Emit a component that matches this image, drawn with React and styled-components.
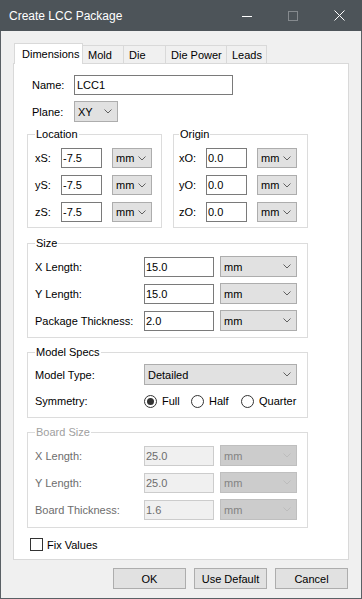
import React from 'react'
import styled, {createGlobalStyle} from 'styled-components'

const GlobalStyle = createGlobalStyle`
  html, body {
    margin: 0;
    padding: 0;
    background: #f0f0f0;
  }
  body {
    font-family: "Liberation Sans", Arial, sans-serif;
    font-size: 11px;
    color: #000;
  }
  * {
    box-sizing: border-box;
  }
`

const Window = styled.div`
  width: 362px;
  height: 599px;
  display: flex;
  flex-direction: column;
  background: #f0f0f0;
`
const TitleBar = styled.div`
  height: 31px;
  background: #4d5459;
  display: flex;
  align-items: center;
  flex-shrink: 0;
`
const Title = styled.div`
  flex: 1;
  padding-left: 9px;
  color: #fff;
  font-size: 12px;
`
const CaptionButton = styled.div`
  width: 46px;
  height: 31px;
  display: flex;
  align-items: center;
  justify-content: center;
`
const Body = styled.div`
  flex: 1;
  border: 1px solid #5a6065;
  border-top: none;
  padding: 12px 12px 0 12px;
  display: flex;
  flex-direction: column;
`
const TabRow = styled.div`
  display: flex;
  align-items: flex-end;
  height: 21px;
  margin: 0 0 -1px 1px;
  position: relative;
  z-index: 1;
`
const Tab = styled.div`
  width: ${p => p.w}px;
  height: ${p => p.active ? 21 : 19}px;
  margin-left: ${p => p.first ? 0 : -1}px;
  background: ${p => p.active ? '#fff' : '#f0f0f0'};
  border: 1px solid #d9d9d9;
  border-bottom: ${p => p.active ? 'none' : '1px solid #d9d9d9'};
  padding: ${p => p.active ? '3px 0 0 7px' : '2px 0 0 5px'};
  line-height: 14px;
  position: relative;
  z-index: ${p => p.active ? 2 : 1};
  white-space: nowrap;
`
const Panel = styled.div`
  width: 336px;
  height: 497px;
  background: #fff;
  border: 1px solid #d9d9d9;
  padding: 11px 0 0 13px;
  display: flex;
  flex-direction: column;
`
const FieldRow = styled.div`
  display: flex;
  align-items: center;
  margin-left: 5px;
  margin-bottom: 6px;
`
const RowLabel = styled.div`
  width: ${p => p.w}px;
  flex-shrink: 0;
  color: ${p => p.disabled ? '#6d6d6d' : '#000'};
  white-space: nowrap;
`
const TextBox = styled.input`
  width: ${p => p.w}px;
  height: 20px;
  border: 1px solid ${p => p.disabled ? '#cccccc' : '#7a7a7a'};
  background: ${p => p.disabled ? '#f0f0f0' : '#fff'};
  color: ${p => p.disabled ? '#6d6d6d' : '#000'};
  font: inherit;
  padding: 0 0 0 ${p => p.pad ?? 1}px;
  margin: 0;
  outline: none;
  border-radius: 0;
`
const Combo = styled.div`
  width: ${p => p.w}px;
  height: ${p => p.h || 21}px;
  margin-left: ${p => p.ml || 0}px;
  border: 1px solid ${p => p.disabled ? '#bfbfbf' : '#adadad'};
  background: ${p => p.disabled ? '#cccccc' : '#e1e1e1'};
  color: ${p => p.disabled ? '#838383' : '#000'};
  display: flex;
  align-items: center;
  justify-content: space-between;
  padding: 0 5px 0 3px;
  flex-shrink: 0;
`
const GroupPair = styled.div`
  display: flex;
  gap: 11px;
  margin-top: -1px;
`
const Group = styled.fieldset`
  width: ${p => p.w || 281}px;
  margin: ${p => p.mt || 0}px 0 0 0;
  border: 1px solid #dcdcdc;
  padding: ${p => p.pt || 6}px 0 ${p => p.pb || 6}px ${p => p.pl || 7}px;
  min-width: 0;
  display: flex;
  flex-direction: column;
  gap: ${p => p.gap || 6}px;
`
const Legend = styled.legend`
  font-size: 11px;
  line-height: 14px;
  padding: 0 1px;
  margin: 0;
  color: ${p => p.disabled ? '#a0a0a0' : '#000'};
`
const GridRow = styled.div`
  display: flex;
  align-items: center;
  height: ${p => p.h || 21}px;
`
const RadioItem = styled.div`
  width: ${p => p.w}px;
  display: flex;
  align-items: center;
  gap: 5px;
  flex-shrink: 0;
`
const RadioCircle = styled.div`
  width: 13px;
  height: 13px;
  border-radius: 50%;
  border: 1px solid #333;
  background: #fff;
  display: flex;
  align-items: center;
  justify-content: center;
  &::after {
    content: '';
    width: 7px;
    height: 7px;
    border-radius: 50%;
    background: ${p => p.checked ? '#333' : 'transparent'};
  }
`
const CheckRow = styled.div`
  display: flex;
  align-items: center;
  gap: 4px;
  margin: 10px 0 0 3px;
`
const CheckBox = styled.div`
  width: 13px;
  height: 13px;
  border: 1px solid #333;
  background: #fff;
`
const Footer = styled.div`
  display: flex;
  justify-content: flex-end;
  gap: 8px;
  margin-top: 8px;
  padding-right: 1px;
`
const Button = styled.div`
  width: 73px;
  height: 21px;
  background: #e1e1e1;
  border: 1px solid #adadad;
  display: flex;
  align-items: center;
  justify-content: center;
`

const Chevron = ({disabled}) => (
  <svg width="8" height="5" viewBox="0 0 8 5">
    <polyline points="0.5,0.5 4,4 7.5,0.5" fill="none" stroke={disabled ? '#bcbcbc' : '#606060'} strokeWidth="1"/>
  </svg>
)

const Select = ({value, w, h, ml, disabled}) => (
  <Combo w={w} h={h} ml={ml} disabled={disabled}>
    <span>{value}</span>
    <Chevron disabled={disabled}/>
  </Combo>
)

const coordRows = (prefix) => ['x', 'y', 'z'].map(a => a + prefix)

const App = () => {
  const tabs = [
    {name: 'Dimensions', w: 69, active: true},
    {name: 'Mold', w: 42},
    {name: 'Die', w: 43},
    {name: 'Die Power', w: 62},
    {name: 'Leads', w: 41},
  ]
  const sizeRows = [['X Length:', '15.0'], ['Y Length:', '15.0'], ['Package Thickness:', '2.0']]
  const boardRows = [['X Length:', '25.0'], ['Y Length:', '25.0'], ['Board Thickness:', '1.6']]
  return (
    <Window>
      <GlobalStyle/>
      <TitleBar>
        <Title>Create LCC Package</Title>
        <CaptionButton>
          <svg width="10" height="10" viewBox="0 0 10 10">
            <line x1="0" y1="5.5" x2="10" y2="5.5" stroke="#fff" strokeWidth="1"/>
          </svg>
        </CaptionButton>
        <CaptionButton>
          <svg width="10" height="10" viewBox="0 0 10 10">
            <rect x="0.5" y="0.5" width="9" height="9" fill="none" stroke="#858a8e" strokeWidth="1"/>
          </svg>
        </CaptionButton>
        <CaptionButton>
          <svg width="11" height="11" viewBox="0 0 11 11">
            <path d="M0.5 0.5 L10.5 10.5 M10.5 0.5 L0.5 10.5" stroke="#fff" strokeWidth="1"/>
          </svg>
        </CaptionButton>
      </TitleBar>
      <Body>
        <TabRow>
          {tabs.map((t, i) => (
            <Tab key={t.name} w={t.w} active={t.active} first={i === 0}>{t.name}</Tab>
          ))}
        </TabRow>
        <Panel>
          <FieldRow>
            <RowLabel w={42}>Name:</RowLabel>
            <TextBox w={159} pad={2} defaultValue="LCC1" readOnly/>
          </FieldRow>
          <FieldRow>
            <RowLabel w={42}>Plane:</RowLabel>
            <Select value="XY" w={44}/>
          </FieldRow>
          <GroupPair>
            <Group w={135} pt={7} pb={5} pl={7} gap={7}>
              <Legend>Location</Legend>
              {coordRows('S').map(l => (
                <GridRow key={l} h={20}>
                  <RowLabel w={26}>{l}:</RowLabel>
                  <TextBox w={41} defaultValue="-7.5" readOnly/>
                  <Select value="mm" w={40} h={20} ml={10}/>
                </GridRow>
              ))}
            </Group>
            <Group w={135} pt={7} pb={5} pl={5} gap={7}>
              <Legend>Origin</Legend>
              {coordRows('O').map(l => (
                <GridRow key={l} h={20}>
                  <RowLabel w={27}>{l}:</RowLabel>
                  <TextBox w={41} defaultValue="0.0" readOnly/>
                  <Select value="mm" w={40} h={20} ml={10}/>
                </GridRow>
              ))}
            </Group>
          </GroupPair>
          <Group mt={8} pt={6} pb={6}>
            <Legend>Size</Legend>
            {sizeRows.map(([l, v]) => (
              <GridRow key={l}>
                <RowLabel w={109}>{l}</RowLabel>
                <TextBox w={70} defaultValue={v} readOnly/>
                <Select value="mm" w={77} ml={6}/>
              </GridRow>
            ))}
          </Group>
          <Group mt={7} pt={5} pb={6}>
            <Legend>Model Specs</Legend>
            <GridRow>
              <RowLabel w={109}>Model Type:</RowLabel>
              <Select value="Detailed" w={153}/>
            </GridRow>
            <GridRow h={20}>
              <RowLabel w={109}>Symmetry:</RowLabel>
              <RadioItem w={47}><RadioCircle checked/>Full</RadioItem>
              <RadioItem w={50}><RadioCircle/>Half</RadioItem>
              <RadioItem w={60}><RadioCircle/>Quarter</RadioItem>
            </GridRow>
          </Group>
          <Group mt={7} pt={6} pb={7}>
            <Legend disabled>Board Size</Legend>
            {boardRows.map(([l, v]) => (
              <GridRow key={l}>
                <RowLabel w={109} disabled>{l}</RowLabel>
                <TextBox w={70} defaultValue={v} disabled readOnly/>
                <Select value="mm" w={77} ml={6} disabled/>
              </GridRow>
            ))}
          </Group>
          <CheckRow>
            <CheckBox/>
            <span>Fix Values</span>
          </CheckRow>
        </Panel>
        <Footer>
          <Button>OK</Button>
          <Button>Use Default</Button>
          <Button>Cancel</Button>
        </Footer>
      </Body>
    </Window>
  )
}

export default App
